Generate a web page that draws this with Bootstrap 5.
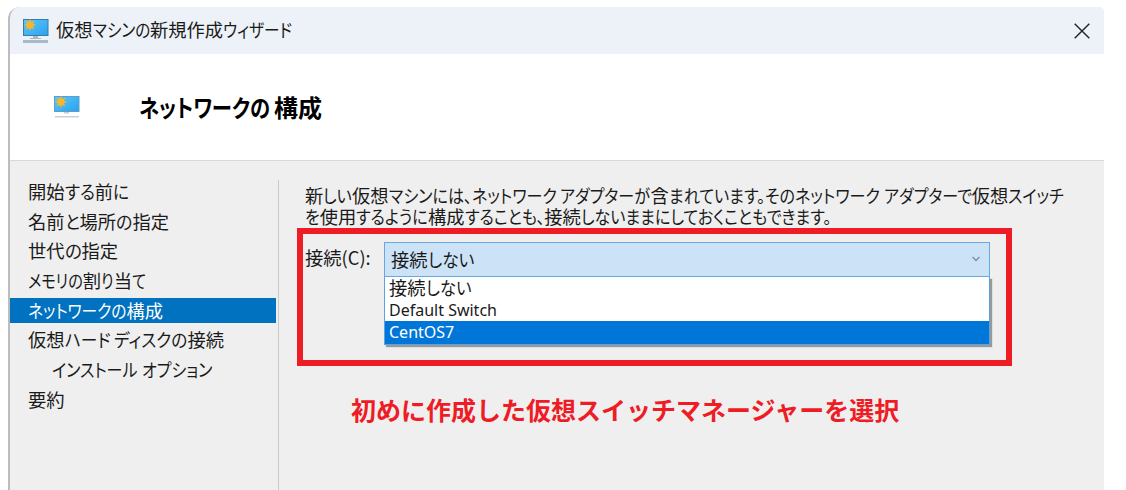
<!DOCTYPE html>
<html lang="ja">
<head>
    <meta charset="UTF-8">
    <meta name="viewport" content="width=device-width, initial-scale=1.0">
    <title>仮想マシンの新規作成ウィザード</title>
    <link href="https://cdn.jsdelivr.net/npm/bootstrap@5.3.0/dist/css/bootstrap.min.css" rel="stylesheet">
    <style>
        body {
            height: 490px;
            overflow: hidden;
            background: #fff;
            color: #1a1a1a;
            font-family: "Noto Sans", "Noto Sans CJK JP", sans-serif;
            font-size: 18.3px;
            line-height: 20px;
            padding: 7px 22px 0 8px;
        }
        .jp {
            font-family: "Noto Sans CJK JP", sans-serif;
            font-feature-settings: "palt";
            white-space: nowrap;
        }
        .kana {
            display: inline-block;
            transform-origin: 0 50%;
        }
        .wizard {
            height: 483px;
            background: #efefef;
            border-left: 2px solid #bdbdbd;
            border-top-left-radius: 12px;
            border-top-right-radius: 5px;
            overflow: hidden;
        }
        .title-bar {
            height: 47px;
            background: #edf2f8;
            padding: 0 14px 0 13px;
        }
        .title-text {
            margin-left: 7px;
            margin-top: -3px;
        }
        .wizard-header {
            height: 107px;
            background: #fff;
            border-bottom: 1px solid #d9d9d9;
            padding-left: 44px;
        }
        .wizard-header h1 {
            font-size: 24px;
            line-height: 30px;
            color: #000;
            margin-left: 59px;
        }
        .steps {
            width: 268px;
            padding-top: 16px;
            flex: none;
        }
        .step {
            height: 29.7px;
            padding: 2px 2px 2px 0;
        }
        .step > div {
            height: 25px;
            line-height: 24px;
            padding-left: 18px;
        }
        .step.current > div {
            background: #0072c0;
            color: #fff;
        }
        .divider {
            width: 1px;
            margin-top: 19px;
            background: #c9c9c9;
        }
        .pane {
            padding: 24px 0 0 18px;
        }
        .intro {
            padding-left: 8px;
            height: 43px;
        }
        .frame {
            width: 715px;
            height: 138px;
            border: 6px solid #ee1c25;
            padding: 8px 0 0 2px;
        }
        .frame label {
            width: 79px;
            line-height: 31px;
        }
        .combo {
            width: 606px;
        }
        .combo-value {
            height: 35px;
            background: #cce3f7;
            border: 1px solid #69a8de;
            padding: 0 9px 2px 6px;
        }
        .combo-list {
            height: 68px;
            background: #fff;
            border: 1px solid #5ba3e3;
            border-top: 0;
            box-shadow: 2px 2px 1px #999;
            font-size: 16px;
        }
        .combo-list > div {
            height: 22px;
            line-height: 22px;
            padding-left: 4px;
        }
        .combo-list .jp {
            font-size: 18.3px;
            line-height: 20px;
        }
        .combo-list .picked {
            height: 23px;
            background: #0077d8;
            color: #fff;
        }
        .note {
            color: #ee1c25;
            font-family: "Noto Sans CJK JP", sans-serif;
            font-size: 25px;
            line-height: 36px;
            margin: 25px 0 0 54px;
        }
    </style>
</head>
<body>
    <div class="wizard">
        <div class="title-bar d-flex align-items-center">
            <svg width="26" height="26" viewBox="0 0 26 26">
                <defs>
                    <linearGradient id="screen" x1="0" y1="0" x2="1" y2="1">
                        <stop offset="0" stop-color="#5cc8fa"/>
                        <stop offset="1" stop-color="#2ba0ee"/>
                    </linearGradient>
                </defs>
                <rect x="0.5" y="1.5" width="24.5" height="16" fill="url(#screen)" stroke="#3b7ba5"/>
                <path d="M10 18h5v2h3v1H7v-1h3z" fill="#aab7c4"/>
                <rect x="0" y="22" width="25" height="3" fill="#a9b9c9"/>
                <path d="M7 1l1.200 3 3-1.200-1.200 3 3 1.200-3 1.200 1.200 3-3-1.200L7 13l-1.200-3-3 1.200L4 8.200 1 7l3-1.200-1.200-3 3 1.200z" fill="#f9b728"/>
            </svg>
            <span class="jp title-text" data-width="236">仮想マシンの新規作成ウィザード</span>
            <svg class="ms-auto" width="16" height="16" viewBox="0 0 16 16">
                <path d="M.7.7l14.600 14.600M15.300.7L.7 15.300" stroke="#222" stroke-width="1.400"/>
            </svg>
        </div>
        <div class="wizard-header d-flex align-items-center">
            <svg width="26" height="24" viewBox="0 0 26 24">
                <rect x="0.5" y="1.5" width="24.5" height="15" fill="url(#screen)" stroke="#5f9fc5"/>
                <path d="M10 17h5v1.500h-5z" fill="#c5ced8"/>
                <rect x="1" y="21" width="24" height="1.5" fill="#c9d1d8"/>
                <path d="M7 1l1.200 3 3-1.200-1.200 3 3 1.200-3 1.200 1.200 3-3-1.200L7 13l-1.200-3-3 1.200L4 8.200 1 7l3-1.200-1.200-3 3 1.200z" fill="#f9b728"/>
            </svg>
            <h1 class="jp fw-bold mb-0"><span data-width="131">ネットワークの</span><span class="ms-1">構成</span></h1>
        </div>
        <div class="d-flex h-100">
            <div class="steps">
                <div class="step"><div><span class="jp" data-width="101">開始する前に</span></div></div>
                <div class="step"><div><span class="jp" data-width="141">名前と場所の指定</span></div></div>
                <div class="step"><div><span class="jp" data-width="90">世代の指定</span></div></div>
                <div class="step"><div><span class="jp" data-width="118">メモリの割り当て</span></div></div>
                <div class="step current"><div><span class="jp" data-width="135">ネットワークの構成</span></div></div>
                <div class="step"><div><span class="jp" data-width="196">仮想ハード ディスクの接続</span></div></div>
                <div class="step"><div><span class="jp ms-4" data-width="160">インストール オプション</span></div></div>
                <div class="step"><div><span class="jp">要約</span></div></div>
            </div>
            <div class="divider"></div>
            <div class="pane">
                <div class="intro">
                    <span class="jp" data-width="759">新しい仮想マシンには、ネットワーク アダプターが含まれています。そのネットワーク アダプターで仮想スイッチ</span><br>
                    <span class="jp" data-width="526">を使用するように構成することも、接続しないままにしておくこともできます。</span>
                </div>
                <div class="frame d-flex">
                    <label class="jp">接続(C):</label>
                    <div class="combo">
                        <div class="combo-value d-flex align-items-center justify-content-between">
                            <span class="jp" data-width="83">接続しない</span>
                            <svg width="8" height="6" viewBox="0 0 8 6"><path d="M.5 1L4 4.500 7.500 1" fill="none" stroke="#7c8e9e" stroke-width="1.300"/></svg>
                        </div>
                        <div class="combo-list">
                            <div class="jp"><span data-width="82">接続しない</span></div>
                            <div>Default Switch</div>
                            <div class="picked">CentOS7</div>
                        </div>
                    </div>
                </div>
                <div class="note fw-bold">初めに作成した仮想スイッチマネージャーを選択</div>
            </div>
        </div>
    </div>
    <script src="https://cdn.jsdelivr.net/npm/bootstrap@5.3.0/dist/js/bootstrap.bundle.min.js"></script>
    <script>
        // Condense only the kana of a line so that the line takes data-width pixels
        document.querySelectorAll('[data-width]').forEach(line => {
            line.innerHTML = line.textContent.replace(/[\u3001-\u30ff]+/g, '<span class="kana">$&</span>');
            const runs = [...line.querySelectorAll('.kana')];
            const widths = runs.map(run => run.getBoundingClientRect().width);
            const kana = widths.reduce((a, b) => a + b, 0);
            const rest = line.getBoundingClientRect().width - kana;
            const scale = (line.dataset.width - rest) / kana;
            runs.forEach((run, i) => {
                run.style.transform = `scaleX(${scale})`;
                run.style.marginRight = `${widths[i] * (scale - 1)}px`;
            });
        });
    </script>
</body>
</html>
